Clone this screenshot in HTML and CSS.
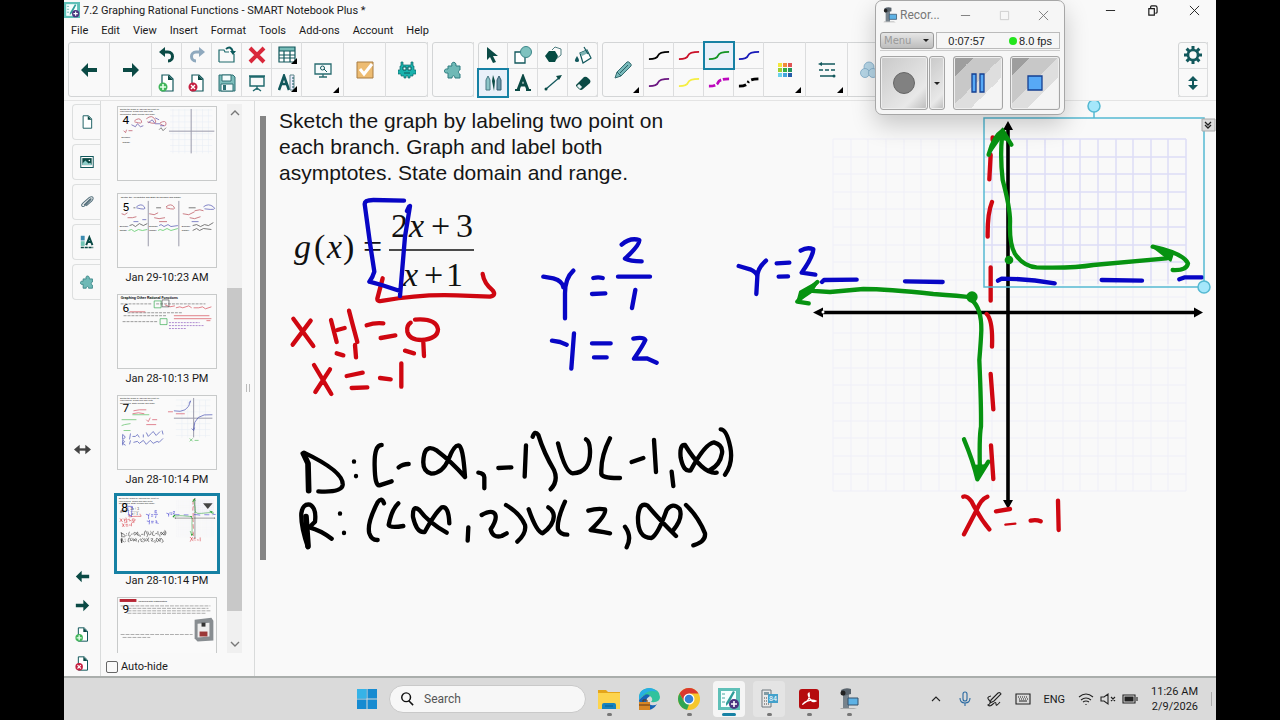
FILE: index.html
```html
<!DOCTYPE html>
<html lang="en">
<head>
<meta charset="utf-8">
<title>7.2 Graphing Rational Functions - SMART Notebook Plus</title>
<link rel="stylesheet" href="styles.css">
</head>
<body>
<svg class="sprite" aria-hidden="true">
  <symbol id="left" viewBox="0 0 18 18"><path d="M1 9 8 2v5h9v4H8v5z" fill="#0b4a45"/></symbol>
  <symbol id="right" viewBox="0 0 18 18"><path d="M17 9 10 2v5H1v4h9v5z" fill="#0b4a45"/></symbol>
  <symbol id="undo" viewBox="0 0 18 18"><path d="M4 6h6c6 0 6 9 0 9" fill="none" stroke="#0b4a45" stroke-width="3"/><path d="M1 6 7 1v10z" fill="#0b4a45"/></symbol>
  <symbol id="redo" viewBox="0 0 18 18"><path d="M14 6H8c-6 0-6 9 0 9" fill="none" stroke="#8fa9be" stroke-width="3"/><path d="M17 6 11 1v10z" fill="#8fa9be"/></symbol>
  <symbol id="open" viewBox="0 0 18 18"><path d="M1 16V4h5l1 2h4M16 8v8H1" fill="none" stroke="#1e6a6c" stroke-width="1.2"/><path d="M8 3q5-4 7 3" fill="none" stroke="#0b5a5c" stroke-width="2"/><path d="M12 5h6l-3 4z" fill="#0b5a5c"/></symbol>
  <symbol id="delete" viewBox="0 0 18 18"><path d="m2 2 14 14M16 2 2 16" stroke="#d9283b" stroke-width="4"/></symbol>
  <symbol id="table" viewBox="0 0 18 18"><path d="M1 1h16v15H1z" fill="#fff"/><path d="M1 1h16v4H1z" fill="#79bcb8"/><path d="M1 1h16v15H1zM1 5h16M1 9h16M1 12h16M6 5v11M12 5v11" fill="none" stroke="#12585c" stroke-width="1.2"/></symbol>
  <symbol id="page" viewBox="0 0 18 18"><path d="M4 1h7l4 4v12H4z" fill="#fff" stroke="#12585c" stroke-width="1.2"/><path d="M10 1v5h5z" fill="#0b4a45"/></symbol>
  <symbol id="pageadd" viewBox="0 0 18 18"><use href="#page"/><circle cx="5" cy="13" r="4.5" fill="#42b55c"/><path d="M5 10v6M2 13h6" stroke="#e6ffe9" stroke-width="1.6"/></symbol>
  <symbol id="pagedel" viewBox="0 0 18 18"><use href="#page"/><circle cx="5" cy="13" r="4.5" fill="#c51f40"/><path d="m3 11 4 4m0-4-4 4" stroke="#fff" stroke-width="1.4"/></symbol>
  <symbol id="save" viewBox="0 0 18 18"><path d="M1 1h14l2 2v14H1z" fill="#7dbdbb" stroke="#2e7074"/><path d="M4 1h9v6H4zM3 10h12v7H3z" fill="#f4fbfb" stroke="#2e7074"/><path d="M5 11h3v5H5z" fill="#2e7074"/></symbol>
  <symbol id="shade" viewBox="0 0 18 18"><path d="M1 2h16M2 3h14v9H2zM9 12v4M5 17l4-3 4 3" fill="none" stroke="#1e686c" stroke-width="1.4"/></symbol>
  <symbol id="measure" viewBox="0 0 18 18"><path d="M1 16 6 2l5 14M3 10h6" fill="none" stroke="#12585c" stroke-width="2.6"/><path d="M12 1h4v15h-4z" fill="#eef" stroke="#5c8588"/><path d="M14 4h2m-2 3h2m-2 3h2m-2 3h2" stroke="#12585c"/></symbol>
  <symbol id="screen" viewBox="0 0 18 18"><path d="M1 3h16v10H1zM5 16h8M9 13v3" fill="#f5fbfc" stroke="#286c70" stroke-width="1.3"/><circle cx="8.500" cy="7" r="2" fill="none" stroke="#12585c"/><path d="m10 8 3 3" stroke="#12585c"/></symbol>
  <symbol id="check" viewBox="0 0 18 18"><path d="M1 1h16v16H1z" fill="#edbc72" stroke="#a87c42"/><path d="m4 8 4 5 8-10" fill="none" stroke="#fff" stroke-width="3"/></symbol>
  <symbol id="monster" viewBox="0 0 18 18"><path d="M3 1h2v3h8V1h2v4h1v4h2v4h-3v2h-3v2h-2v-2H8v2H6v-2H3v-2H0V9h2V5h1z" fill="#19b2ad" stroke="#11696c" stroke-width=".7"/><path d="M5 6h3v3H5zm5 0h3v3h-3zM6 12h6" fill="#dff" stroke="#11585c"/></symbol>
  <symbol id="puzzle" viewBox="0 0 18 18"><path d="M4 5h4c-2-5 5-5 4 0h4v4c-2 0-2 4 0 4v4h-5c0-3-3-3-3 0H4v-5c-5 1-5-5 0-4z" fill="#6fb9b6" stroke="#2f7d80"/></symbol>
  <symbol id="pointer" viewBox="0 0 18 18"><path d="M3 1v13l3-3 3 6 3-1-3-6h5z" fill="#0b4a45"/></symbol>
  <symbol id="shapes" viewBox="0 0 18 18"><path d="M1 6h10v11H1z" fill="#fff" stroke="#12585c" stroke-width="1.3"/><circle cx="12" cy="6" r="5.500" fill="#7fc2bf" stroke="#3b8588"/></symbol>
  <symbol id="poly" viewBox="0 0 18 18"><path d="m8 4 3-3 6 2v6l-5 4" fill="none" stroke="#4f7e80"/><path d="M5 5h6l3 5-3 6H5l-4-6z" fill="#064b43"/></symbol>
  <symbol id="bucket" viewBox="0 0 18 18"><path d="m6 7 7-3 4 8-8 5z" fill="#fff" stroke="#12585c" stroke-width="1.2"/><path d="m6 7 7-3 1 3-6 3z" fill="#7fb4b4"/><path d="m10 1 4 7" stroke="#12585c" stroke-width="1.2"/><path d="M3 10q-4 6 0 6t0-6" fill="#12585c"/></symbol>
  <symbol id="pens" viewBox="0 0 18 18"><path d="m2 6 2-4 2 4v10H2z" fill="#8cc5c8" stroke="#497984"/><path d="m9 1 2 6-1 10-2-10z" fill="#0b4a45"/><path d="m13 6 2-4 2 4v10h-4z" fill="#6b98a8" stroke="#345c70"/></symbol>
  <symbol id="glyphA" viewBox="0 0 18 18"><path d="M4 16 9 3l5 13M5 11h8" fill="none" stroke="#0b4a45" stroke-width="3"/><path d="M1 16h5m6 0h5" stroke="#0b4a45" stroke-width="2"/></symbol>
  <symbol id="line" viewBox="0 0 18 18"><path d="M2 15 16 3" stroke="#12585c" stroke-width="1.3"/><circle cx="2" cy="15" r="1.500" fill="#0b4a45"/><path d="m12 2 6-1-3 5z" fill="#0b4a45"/></symbol>
  <symbol id="eraser" viewBox="0 0 18 18"><path d="m2 11 8-8q2-1 4 1l2 2q1 1 0 3l-7 6q-2 2-4 0l-3-3z" fill="#0b4a45"/><path d="m4 11 3 3" stroke="#e8f4f4" stroke-width="3"/></symbol>
  <symbol id="pencil" viewBox="0 0 18 18"><path d="m1 17 2-6L13 1q1-1 3 1t1 3L7 15z" fill="#78b9ba" stroke="#356d70"/><path d="m3 11 4 4M6 12l8-8" stroke="#2a6267" fill="none"/></symbol>
  <symbol id="wave" viewBox="0 0 24 12"><path d="M1 10c5 0 9-1 10-4s6-4 12-4" fill="none" stroke="currentColor" stroke-width="2"/></symbol>
  <symbol id="dash" viewBox="0 0 24 12"><path d="M1 10c5 0 9-1 10-4s6-4 12-4" fill="none" stroke="currentColor" stroke-width="3" stroke-dasharray="7 2"/></symbol>
  <symbol id="dots" viewBox="0 0 24 12"><path d="M1 10c5 0 9-1 10-4s6-4 12-4" fill="none" stroke="currentColor" stroke-width="3" stroke-dasharray="8 3 2 3"/></symbol>
  <symbol id="palette" viewBox="0 0 18 18"><path fill="#f4e63c" d="M2 2h4v4H2z"/><path fill="#ef8b3c" d="M7 2h4v4H7z"/><path fill="#e05555" d="M12 2h4v4h-4z"/><path fill="#9bd032" d="M2 7h4v4H2z"/><path fill="#35ad45" d="M7 7h4v4H7z"/><path fill="#26935c" d="M12 7h4v4h-4z"/><path fill="#6bd3ea" d="M2 12h4v4H2z"/><path fill="#43a5dd" d="M7 12h4v4H7z"/><path fill="#245ca8" d="M12 12h4v4h-4z"/></symbol>
  <symbol id="styles" viewBox="0 0 18 18"><path d="M2 3h15M2 15h15" stroke="#12585c" stroke-width="1.3"/><path d="M1 9h17" stroke="#12585c" stroke-width="1.3" stroke-dasharray="4 2"/><path d="m4 1-4 2 4 2z" fill="#12585c"/><circle cx="16" cy="15" r="1.500" fill="#12585c"/></symbol>
  <symbol id="bubbles" viewBox="0 0 18 18"><g fill="#b7d7e8" stroke="#7daac6" stroke-width=".8"><circle cx="9" cy="6" r="5"/><circle cx="5" cy="12" r="4.500"/><circle cx="13" cy="12" r="4.500"/></g></symbol>
  <symbol id="gear" viewBox="0 0 18 18"><path d="M9 0v4m0 10v4M0 9h4m10 0h4M2.600 2.600l3 3m6.800 6.800 3 3m0-12.800-3 3m-6.800 6.800-3 3" stroke="#12585c" stroke-width="3"/><circle cx="9" cy="9" r="5" fill="#f9f9f9" stroke="#12585c" stroke-width="2.600"/></symbol>
  <symbol id="vert" viewBox="0 0 18 18"><path d="m9 2 5 5H4zm0 14 5-5H4z" fill="#12585c"/><path d="M9 5v8" stroke="#12585c" stroke-width="2"/></symbol>
  <symbol id="picture" viewBox="0 0 18 18"><path d="M1 2h16v14H1z" fill="#fff" stroke="#12585c" stroke-width="1.300"/><path d="M3 4h12v9H3z" fill="#0b4a45"/><path d="m3 11 4-4 4 4 2-1 2 2v1H3z" fill="#8dccc8"/><circle cx="12" cy="7" r="1" fill="#fff"/></symbol>
  <symbol id="clip" viewBox="0 0 18 18"><path d="m5 13 8-8q2-1 1 1l-8 8q-3 2-4-1 0-1 2-3l8-7q4-2 5 1 0 2-2 4l-7 6" fill="none" stroke="#526e7a" stroke-width="1.300"/></symbol>
  <symbol id="props" viewBox="0 0 18 18"><path d="M1 1h5v6H1z" fill="#3b8bb0"/><path d="M1 8h5v6H1z" fill="#70c4b4"/><path d="m8 13 4-10 4 10m-6-4h4" fill="none" stroke="#0b4a45" stroke-width="2.500"/><path d="M1 16h16" stroke="#0b4a45" stroke-width="2" stroke-dasharray="4 1"/></symbol>
  <symbol id="horiz" viewBox="0 0 18 18"><path d="m0 9 6-5v10zm18 0-6-5v10z" fill="#444"/><path d="M4 9h10" stroke="#444" stroke-width="2.500"/></symbol>
  <symbol id="smart" viewBox="0 0 22 22"><path d="M0 0h22v22H0z" fill="#5fc0b8"/><path d="M3 3h15v16H3z" fill="#f7ffff"/><path d="M4 6h3m-3 4h3m-3 4h3" stroke="#4aa6a0"/><path d="m8 15 7-12 2 1-6 11-3 3z" fill="#2f9d9a"/><circle cx="16" cy="16" r="5" fill="#4b347f"/><path d="M16 13v6m-3-3h6" stroke="#fff" stroke-width="1.600"/></symbol>
  <symbol id="camera" viewBox="0 0 22 22"><path d="M3 20h13l3 1H2z" fill="#aaa"/><path d="M5 6h6v14H5z" fill="#77828b"/><path d="M3 2q5-3 10-1v5l-8 2z" fill="#59636c"/><circle cx="5" cy="5" r="2.500" fill="#222"/><path d="M10 10h10v7H10z" fill="#5eb2e5" stroke="#35516a"/></symbol>
  <symbol id="minimize" viewBox="0 0 12 12"><path d="M1 6h10" stroke="currentColor"/></symbol>
  <symbol id="maximize" viewBox="0 0 12 12"><path d="M1.500 1.500h9v9h-9z" fill="none" stroke="currentColor"/></symbol>
  <symbol id="restore" viewBox="0 0 12 12"><path d="M2 4h6v7H2zM4 4V2q0-1 1-1h4q2 0 2 2v5q0 1-2 1" fill="none" stroke="currentColor" stroke-width="1.300"/></symbol>
  <symbol id="close" viewBox="0 0 12 12"><path d="m1 1 10 10M11 1 1 11" stroke="currentColor"/></symbol>
  <symbol id="up" viewBox="0 0 12 12"><path d="m2 8 4-4 4 4" fill="none" stroke="currentColor" stroke-width="1.400"/></symbol>
  <symbol id="down" viewBox="0 0 12 12"><path d="m2 4 4 4 4-4" fill="none" stroke="currentColor" stroke-width="1.400"/></symbol>

  <g id="prompt" class="prompt"><text x="279" y="128">Sketch the graph by labeling two point on</text><text x="279" y="154">each branch. Graph and label both</text><text x="279" y="180">asymptotes. State domain and range.</text></g>

  <g id="slide">
    <use href="#prompt"/>
    <g class="math"><text x="294" y="258"><tspan class="it">g</tspan><tspan x="314">(</tspan><tspan class="it" x="327">x</tspan><tspan x="343">)</tspan><tspan x="363">=</tspan></text><text x="391" y="237">2<tspan class="it" x="409">x</tspan><tspan x="431">+</tspan><tspan x="456">3</tspan></text><text y="286"><tspan class="it" x="403">x</tspan><tspan x="424">+</tspan><tspan x="446">1</tspan></text></g>
    <path d="M389 250h85" stroke="#111" stroke-width="1.500"/>
    <path class="grid" d="M833 139h353M833 157h353M833 174h353M833 192h353M833 209h353M833 227h353M833 245h353M833 262h353M833 280h353M833 297h353M833 333h353M833 350h353M833 368h353M833 385h353M833 403h353M833 421h353M833 438h353M833 456h353M833 474h353M833 491h353M833 139v352M851 139v352M868 139v352M886 139v352M904 139v352M921 139v352M939 139v352M956 139v352M974 139v352M992 139v352M1027 139v352M1045 139v352M1063 139v352M1080 139v352M1098 139v352M1116 139v352M1133 139v352M1151 139v352M1168 139v352M1186 139v352"/>
    <path class="grid strong" d="M984 139h202M984 157h202M984 174h202M984 192h202M984 209h202M984 227h202M984 245h202M984 262h202M992 139v145M1027 139v145M1045 139v145M1063 139v145M1080 139v145M1098 139v145M1116 139v145M1133 139v145M1151 139v145M1168 139v145M1186 139v145"/>
    <path d="M820 312.500h376M1008 128v375" stroke="#000" stroke-width="3.600"/>
    <path d="m813 312.500 10-5v10zM1203 312.500l-9-5v10zM1008 121l5 9h-10zM1008 509l5-9h-10z"/><circle cx="823" cy="312" r="1.500" fill="#fff"/>
    <g transform="translate(270 100) scale(.33333)" class="ink">
      <path class="r" d="M338 535 322 596Q322 606 340 602 450 582 560 586L660 590Q680 586 668 571 642 550 638 522M70 656 130 738M122 662 68 734M183 660 200 726M202 690 224 684M237 632 248 674 262 726M290 676Q315 667 340 670M332 714 376 706M422 668Q409 676 412 695 418 720 455 720 503 716 504 688 498 654 435 659M200 760 220 766M255 735 258 772M405 752 432 760M460 728 462 768M132 795 184 882M180 808 136 876M230 828 278 818M245 864 292 862M330 834 362 838M394 790V860"/>
      <path class="b" d="M402 302 310 300Q284 300 284 312L300 430 313 515Q309 530 298 545L335 555 390 573M420 318 405 410 390 588M411 333 417 320M820 530 850 535Q878 543 880 562M910 512Q885 535 885 580V655M970 534Q985 530 998 534M966 582 1006 580M1055 434Q1080 412 1108 420 1110 435 1065 476 1080 484 1115 484M1044 530H1140M1096 570 1086 624M846 722 870 726 890 734M912 700 904 806M966 730H1022M972 772H1010M1090 716Q1120 710 1126 720 1120 735 1092 776L1130 775 1160 788"/>
    </g>
    <g transform="translate(280 410) scale(.33333)" class="ink"><path class="k" d="M68 130 72 128Q192 185 188 225 185 248 115 244M222 154v1M228 198v1M305 105Q282 105 284 170 285 228 298 226L335 214M356 172Q368 162 386 162M555 201Q549 105 535 106 521 107 506 147 488 190 454 191 421 183 433 132 441 103 471 122 515 155 555 201M595 188Q612 190 613 202V235M655 174 694 172M738 106 734 200M758 80Q765 60 775 75 792 130 822 180 836 212 812 238M834 100Q856 188 878 190 933 188 930 120 929 94 918 88M990 85Q962 140 964 188 960 205 1020 204M1055 156 1090 144M1122 90 1128 186M1175 185 1180 228M1310 188Q1270 194 1215 105 1198 103 1202 143 1211 188 1232 181 1275 101 1302 97 1330 105 1326 130 1320 165 1290 180M1322 58Q1340 58 1351 112 1360 160 1335 194M84 412Q62 350 64 310 68 280 90 284 110 295 105 335L88 352Q122 361 155 386M180 310v1M192 368v1M312 280Q305 260 293 277 260 340 268 370 275 391 293 390M355 280Q335 298 326 345 329 355 370 348M500 368Q445 337 418 300 397 283 399 321 410 370 434 366 466 308 485 292 506 286 508 340M565 352 563 392M605 315Q635 298 645 312 653 327 632 358 638 385 665 378L680 370M678 285Q720 310 735 345 740 370 712 395M746 298Q770 367 788 370 828 340 820 310 815 297 805 292M855 275Q830 330 834 358 841 374 862 374M925 302Q951 294 975 298 980 315 932 360 950 362 990 370M1035 350Q1057 380 1040 412M1188 378Q1139 330 1103 287 1078 274 1074 320 1072 384 1114 384 1133 376 1160 300 1178 275 1199 297 1210 325 1178 363M1218 285Q1255 320 1275 370 1278 395 1240 406"/><path class="k bold" d="M71 132 84 160 86 242M78 320 84 408"/></g>
    <g transform="translate(720 90) scale(.33333)" class="ink">
      <path class="b" d="M56 528 90 538Q112 548 112 560M138 512Q112 535 112 560L109 612M170 520 208 518M176 560 204 559M242 482Q262 470 280 478 278 502 245 548L260 550 286 554M306 576 312 570 410 569M555 574 668 576M834 572 845 566Q920 566 1004 580M1145 570 1266 572M1378 568 1395 562H1446"/>
      <path class="r" d="M818 142V150M812 195 808 268M816 336Q802 370 803 440M812 532V632M800 672Q819 690 816 770"/>
      <path class="g" d="M846 140Q840 200 848 270 872 360 870 400 868 460 884 490 910 530 950 532 1060 535 1120 525L1340 505M806 194Q820 140 848 122L874 164M292 576Q255 610 232 635L266 640M756 622Q720 618 640 612 500 597 430 597L330 606 266 602M1298 470Q1390 490 1404 520 1400 542 1358 540"/>
      <path d="M806 194 848 116 860 150 840 145zM292 576 240 605 232 635 275 606zM1298 470 1360 487 1352 512z" fill="#079311" stroke="#079311" stroke-width="6"/><circle cx="867" cy="510" r="13" fill="#079311"/><circle cx="756" cy="621" r="17" fill="#079311"/>
    </g>
    <g transform="translate(780 280) scale(.33333)" class="ink"><path class="g" d="M575 60Q605 85 604 150 603 180 598 240 604 380 603 440 597 470 600 585M552 478Q580 545 592 598L625 545"/><path d="m582 554 10 44 28-45z" fill="#079311"/><path class="r" d="M632 282 640 388M633 496 640 597M550 650Q560 645 575 665 600 715 628 748M622 650Q602 658 590 690L552 763M648 694 690 687M752 722Q768 718 782 724M834 662 836 750"/><path class="r thin" d="M676 734 706 731"/></g>
  </g>
</svg>

<div class="app">
  <header class="title"><svg class="i16"><use href="#smart"/></svg><span>7.2 Graphing Rational Functions - SMART Notebook Plus *</span>
    <div class="wincontrols"><button aria-label="Minimize"><svg><use href="#minimize"/></svg></button><button aria-label="Restore"><svg><use href="#restore"/></svg></button><button aria-label="Close"><svg><use href="#close"/></svg></button></div>
  </header>
  <nav class="menu"><button>File</button><button>Edit</button><button>View</button><button>Insert</button><button>Format</button><button>Tools</button><button>Add-ons</button><button>Account</button><button>Help</button></nav>

  <div class="toolbar">
    <div class="group">
      <button class="big" aria-label="Previous page"><svg><use href="#left"/></svg></button><button class="big" aria-label="Next page"><svg><use href="#right"/></svg></button>
      <button aria-label="Undo"><svg><use href="#undo"/></svg></button><button aria-label="Add page"><svg><use href="#pageadd"/></svg></button>
      <button aria-label="Redo"><svg><use href="#redo"/></svg></button><button aria-label="Delete page"><svg><use href="#pagedel"/></svg></button>
      <button aria-label="Open"><svg><use href="#open"/></svg></button><button aria-label="Save"><svg><use href="#save"/></svg></button>
      <button aria-label="Delete"><svg><use href="#delete"/></svg></button><button aria-label="Screen shade"><svg><use href="#shade"/></svg></button>
      <button class="more" aria-label="Table"><svg><use href="#table"/></svg></button><button class="more" aria-label="Measurement tools"><svg><use href="#measure"/></svg></button>
      <button class="big more" aria-label="View screens"><svg><use href="#screen"/></svg></button><button class="big" aria-label="Response"><svg><use href="#check"/></svg></button><button class="big" aria-label="Activities"><svg><use href="#monster"/></svg></button>
    </div>
    <div class="group"><button class="big" aria-label="Add-ons"><svg><use href="#puzzle"/></svg></button></div>
    <div class="group">
      <button aria-label="Select"><svg><use href="#pointer"/></svg></button><button class="on" aria-label="Pens"><svg><use href="#pens"/></svg></button>
      <button aria-label="Shapes"><svg><use href="#shapes"/></svg></button><button aria-label="Text"><svg><use href="#glyphA"/></svg></button>
      <button aria-label="Polygons"><svg><use href="#poly"/></svg></button><button aria-label="Lines"><svg><use href="#line"/></svg></button>
      <button aria-label="Fill"><svg><use href="#bucket"/></svg></button><button aria-label="Eraser"><svg><use href="#eraser"/></svg></button>
    </div>
    <div class="group pens">
      <button class="big more" aria-label="Pen types"><svg><use href="#pencil"/></svg></button>
      <button class="black" aria-label="Black pen"><svg><use href="#wave"/></svg></button><button class="purple" aria-label="Purple pen"><svg><use href="#wave"/></svg></button>
      <button class="red" aria-label="Red pen"><svg><use href="#wave"/></svg></button><button class="yellow" aria-label="Yellow pen"><svg><use href="#wave"/></svg></button>
      <button class="green on" aria-label="Green pen"><svg><use href="#wave"/></svg></button><button class="magenta" aria-label="Magenta dashed pen"><svg><use href="#dash"/></svg></button>
      <button class="blue" aria-label="Blue pen"><svg><use href="#wave"/></svg></button><button class="black" aria-label="Black dotted pen"><svg><use href="#dots"/></svg></button>
      <button class="big more" aria-label="Color"><svg><use href="#palette"/></svg></button><button class="big more" aria-label="Line style"><svg><use href="#styles"/></svg></button><button class="big" aria-label="Transparency"><svg><use href="#bubbles"/></svg></button>
    </div>
    <div class="group last"><button aria-label="Settings"><svg><use href="#gear"/></svg></button><button aria-label="Move toolbar"><svg><use href="#vert"/></svg></button></div>
  </div>

  <main>
    <aside class="rail">
      <div class="tabs"><button aria-label="Pages"><svg><use href="#page"/></svg></button><button aria-label="Gallery"><svg><use href="#picture"/></svg></button><button aria-label="Attachments"><svg><use href="#clip"/></svg></button><button aria-label="Properties"><svg><use href="#props"/></svg></button><button aria-label="Add-ons"><svg><use href="#puzzle"/></svg></button></div>
      <button class="swap" aria-label="Move panel"><svg><use href="#horiz"/></svg></button>
      <div class="pager"><button aria-label="Previous"><svg><use href="#left"/></svg></button><button aria-label="Next"><svg><use href="#right"/></svg></button><button aria-label="Add"><svg><use href="#pageadd"/></svg></button><button aria-label="Remove"><svg><use href="#pagedel"/></svg></button></div>
    </aside>
    <section class="sorter">
      <div class="scroller">
        <div class="thumbs">
          <figure class="plain"><svg viewBox="0 0 98 74"><use href="#prompt" transform="scale(.103) translate(-266 -101)"/><path class="tg" d="M52 3h43M52 9h43M52 15h43M52 21h43M52 27h43M52 33h43M52 39h43M52 45h43M55 2v45M61 2v45M67 2v45M79 2v45M85 2v45M91 2v45"/><path class="ta" d="M51 24.500h46M73.500 2v45"/><g class="s"><path stroke="#b43a50" d="M16 14q5-4 7 0t-7 1M28 12q6-5 9 1t-8 2M42 16q6-3 6 1t-6 0M5 24l2 2 1-3m2 1h4"/><path stroke="#483b9e" d="M13 18l4 2 2-3 3 3 3-1M30 16l4-3 3 4 5 0M37 11l4 2M42 19h4"/><path stroke="#444" d="M41 23l2-2 2 3 3-3"/></g><text class="tiny" x="3" y="31">Domain:</text><text class="tiny" x="4" y="36">Range:</text><text class="num" x="4" y="17">4</text></svg></figure>
          <figure><svg viewBox="0 0 98 74"><text class="tiny" x="2" y="4">Identify the Asymptotes and State the Domain and Range</text><path class="ta" d="M30 7v46M61 7v46"/><g class="s"><path stroke="#4043aa" d="M18 13q5-4 8 0t-8 1M86 13q5-4 10 0t-9 2M24 26h4M41 32l2-1 3 2 4-2 3 2 7-1M15 28h5M74 28h7"/><path stroke="#b33a46" d="M3 20l3 1 3-2m0 5 5 0 4-1M48 13q5-4 8 0t-8 1M31 20l5 1 4-2M36 24l5 1 6-1M41 28h8M65 20l6 1 6-3M72 24l5 1 6-2M77 17q6-2 9 0"/><path stroke="#37c146" d="M10 37l3-1 3 2 4-2 4 1 5-1M40 37l2-1 3 1 4-2 4 2 7-2"/><path stroke="#333" d="M11 32l3-1 3 2 4-3 4 2 4-2M75 32l4-1 4 2 4-2 4 1 5-3M75 37l4-2 3 2 4-2 8 1M15 14h2M38 14h5M71 14h7"/></g><text class="tiny" x="1" y="33">Domain:</text><text class="tiny" x="1" y="38">Range:</text><text class="tiny" x="31" y="33">Domain:</text><text class="tiny" x="31" y="38">Range:</text><text class="tiny" x="64" y="33">Domain:</text><text class="tiny" x="64" y="38">Range:</text><text class="num" x="4" y="17">5</text></svg><figcaption>Jan 29-10:23 AM</figcaption></figure>
          <figure><svg viewBox="0 0 98 74"><text class="small" x="2" y="4">Graphing Other Rational Functions</text><path d="M2 9h32m4 0h50M9 18h56M5 21h44M4 27h35" stroke="#999" stroke-width="1" stroke-dasharray="3 1"/><path class="s" stroke="#d23d49" d="M47 10l5 2 5-1M58 13l4-1 3 1 6-2 3 2M76 13h5l4-1 3 2 6-2M11 17h16M56 21h36M56 24h38M89 26h4"/><path class="s" stroke="#28a445" d="M36 6h7v7h-7zM42 24h7v6h-7z"/><path class="s" stroke="#454747" d="M44 5h7v7h-7z"/><path class="s" stroke="#8149b8" stroke-dasharray="2 1" d="M51 28h31M51 31h36M51 34h18"/><text class="num" x="4" y="17">6</text></svg><figcaption>Jan 28-10:13 PM</figcaption></figure>
          <figure><svg viewBox="0 0 98 74"><use href="#prompt" transform="scale(.103) translate(-266 -101)"/><path class="tg" d="M58 4h35M58 10h35M58 16h35M58 28h35M58 34h35M58 40h35M64 4v38M70 4v38M82 4v38M88 4v38"/><path class="ta" d="M56 22.500h39M76 2v40"/><g class="s"><path stroke="#3943ae" d="M56 15q14 3 17-10l-2 2M76 34q0-17 19-15M74 33l2 2 1-3M4 39v5q5-2 0-5m8-1-1 6m3-3h3l2-2 2 3m4-3v3m3-5 2 4 3-3 2-2 3 4 4-4m2-1 1 4M4 45v5m0-5q4 1 0 3l3 2m5-5-1 4m4-2 4-1 2 2 4-3 3 4 4-4 3 3 4-2 2 1 4-4"/><path stroke="#d34357" d="M15 15l6-1 7 0M14 18l6-1 6 1M28 24l2 2 2-4m2 2h5M28 29h10M50 16h5m3 2h9"/><path stroke="#48b852" d="M14 19h17M3 24h15M3 30l3-1 6-1M5 35h7M72 43l3 3m0-3-3 3m5-1h4"/></g><text class="num" x="4" y="16">7</text></svg><figcaption>Jan 28-10:14 PM</figcaption></figure>
          <figure class="selected"><svg viewBox="266 101 950 717"><use href="#slide"/><path d="M1085 170h92l-46 55z" fill="#444"/><text x="304" y="256" class="bignum">8</text></svg><figcaption>Jan 28-10:14 PM</figcaption></figure>
          <figure class="plain"><svg viewBox="0 0 98 74"><path d="M1 1h17v3H1z" fill="#b72735"/><text class="tiny" x="20" y="4">Modeling with Mathematics</text><path d="M2 8h91M9 10.500h82M9 13h85M9 15.500h80M2 37h73M4 40h28" stroke="#999" stroke-width=".8" stroke-dasharray="4 1"/><path d="m77 22 17-2 2 3v20l-16 1-3-3z" fill="#888d91"/><path d="m80 26 12-1v14l-12 1z" fill="#eee"/><path d="M82 34h8v5h-8z" fill="#9b3838"/><path d="M84 25h4v4h-4z" fill="#333"/><text class="num" x="4" y="15">9</text></svg></figure>
        </div>
        <div class="scrollbar"><button aria-label="Scroll up"><svg><use href="#up"/></svg></button><div class="track"><div class="thumb"></div></div><button aria-label="Scroll down"><svg><use href="#down"/></svg></button></div>
        <div class="grip"></div>
      </div>
      <label class="autohide"><input type="checkbox">Auto-hide</label>
    </section>
    <div class="edge"><div></div></div>
    <section class="canvas">
      <svg class="board" viewBox="266 101 950 575"><use href="#slide"/><g fill="#a5e7fb" stroke="#55b9d2" stroke-width="1.500"><path d="M984 118h220v169H984zM1094 112v6" fill="none"/><circle cx="1094" cy="106" r="6"/><circle cx="1204" cy="287" r="6"/></g><path d="M1202 119h13v12h-13z" fill="#ddd" stroke="#aaa"/><path d="m1205 122 3 3 3-3m-6 3 3 3 3-3" fill="none" stroke="#222" stroke-width="1.300"/></svg>
    </section>
  </main>

  <footer>
    <div class="apps">
      <button aria-label="Start"><svg viewBox="0 0 22 22"><path d="M1 1h9.500v9.500H1zm10.500 0H21v9.500h-9.500zM1 11.500h9.500V21H1zm10.500 0H21V21h-9.500z" fill="#168bd1"/><path d="M1 1h9.500v9.500H1z" fill="#36b3e7"/></svg></button>
      <label class="search"><svg viewBox="0 0 16 16"><circle cx="7" cy="6" r="5"/><path d="m10 10 5 5"/></svg><input type="text" placeholder="Search" aria-label="Search"></label>
      <div class="pins">
      <button class="run" aria-label="Files"><svg viewBox="0 0 22 22"><path d="M0 2h8l2 2h12v17H0z" fill="#e4a51a"/><path d="M0 5h22v16H0z" fill="#fdd44d"/><path d="M4 21v-4q0-2 2-2h10q2 0 2 2v4z" fill="#1683bf"/><path d="M7 18h8" stroke="#075c91"/></svg></button>
      <button aria-label="Edge"><svg viewBox="0 0 22 22"><path d="M1 12Q0 1 11 0q11 1 11 9 0 6-9 5 3-3-1-6-5-3-11 4z" fill="#31c29d"/><path d="M1 12Q0 1 11 0q5 0 8 4-10-4-18 8z" fill="#28aee4"/><path d="M1 12q8-9 11-4-8 5 1 9 4 1 6-1-5 8-12 5-6-2-6-9z" fill="#1764b5"/><path d="M1 14h11v8H1z" fill="#d78624"/><path d="M1 17h11M5 14v-2h4v2" fill="none" stroke="#5d361a"/></svg></button>
      <button class="run" aria-label="Chrome"><svg viewBox="0 0 22 22"><circle cx="11" cy="11" r="11" fill="#f5c72d"/><path d="M1.500 5.500A11 11 0 0 1 20.500 5.500H11l-5 8z" fill="#da382f"/><path d="M1.500 5.500 6 13.500l5 3-2 5.300A11 11 0 0 1 1.500 5.500z" fill="#2fa553"/><circle cx="11" cy="11" r="5.500" fill="#fff"/><circle cx="11" cy="11" r="4.300" fill="#347fd6"/></svg></button>
      <button class="run active" aria-label="SMART Notebook"><svg><use href="#smart"/></svg></button>
      <button class="run hot" aria-label="Calculator"><svg viewBox="0 0 22 22"><path d="M4 2h9v17H4z" fill="#e8e8e8" stroke="#6d777d"/><path d="M6 4h5v3H6z" fill="#829ba4"/><path d="M6 10h5m-5 3h5m-5 3h5" stroke="#444" stroke-dasharray="1 1"/><path d="M10 6h10v9H10z" fill="#43a1cb"/><text x="11" y="13" class="calc">84</text></svg></button>
      <button class="run" aria-label="Acrobat"><svg viewBox="0 0 22 22"><rect x="1" y="1" width="20" height="20" rx="3" fill="#b50b0e"/><path d="M5 16q8-4 6-11-2 1 1 6 3 4 6 2-4-2-11 1-3 3-2 2z" fill="none" stroke="#fff" stroke-width="1.300"/></svg></button>
      <button class="run" aria-label="Recorder"><svg><use href="#camera"/></svg></button>
      </div>
    </div>
    <div class="tray">
      <button aria-label="Show hidden icons"><svg viewBox="0 0 16 16"><path d="m4 10 4-4 4 4"/></svg></button>
      <button class="mic" aria-label="Microphone"><svg viewBox="0 0 16 16"><rect x="6" y="1" width="4" height="9" rx="2"/><path d="M3 7q0 5 5 5t5-5M8 12v3"/></svg></button>
      <button aria-label="Pen"><svg viewBox="0 0 16 16"><path d="m5 9 7-7q2-1 3 1l-7 7-4 2zM5 5Q0 6 3 9t-1 5q2 2 5-1t3 0 4-2"/></svg></button>
      <button aria-label="Keyboard"><svg viewBox="0 0 16 16"><path d="M1 3h14v10H1zM4 10h8"/><path d="M3 6h10M4 8h9" stroke-dasharray="1 1"/></svg></button>
      <button class="lang">ENG</button>
      <div class="status"><svg viewBox="0 0 16 16"><path d="M1 6q7-6 14 0M3 9q5-4 10 0M5 11q3-2 6 0M8 13v1"/></svg><svg viewBox="0 0 16 16"><path d="M1 6h3l4-3v10l-4-3H1zM11 6l4 4m0-4-4 4"/></svg><svg viewBox="0 0 16 16"><path d="M1 4h12v8H1zM15 6v4"/><path d="M3 6h8v4H3z" fill="#222"/></svg></div>
      <time><span>11:26 AM</span><span>2/9/2026</span></time><i></i>
    </div>
  </footer>

  <section class="recorder">
    <header><svg class="i16"><use href="#camera"/></svg><span>Recor...</span><div><button aria-label="Minimize recorder"><svg><use href="#minimize"/></svg></button><button class="dim" aria-label="Maximize recorder"><svg><use href="#maximize"/></svg></button><button aria-label="Close recorder"><svg><use href="#close"/></svg></button></div></header>
    <div class="info"><button>Menu<b></b></button><p><span>0:07:57</span><span class="fps"><i></i>8.0 fps</span></p></div>
    <div class="controls"><div class="split"><button aria-label="Record"><i></i></button><button class="arrow" aria-label="Record options"><b></b></button></div><button class="sq" aria-label="Pause"><svg viewBox="0 0 20 20"><path d="M4 1h4v18H4zM12 1h4v18h-4z"/></svg></button><button class="sq" aria-label="Stop"><svg viewBox="0 0 20 20"><path d="M3 3h14v14H3z"/></svg></button></div>
  </section>
</div>
</body>
</html>
```
FILE: styles.css
```css
* { box-sizing: border-box; }
body { margin: 0; padding: 0 64px; background: #000; color: #1a1a1a; font-family: Roboto, "Noto Sans", sans-serif; font-size: 11px; }
button { display: flex; align-items: center; justify-content: center; margin: 0; padding: 0; border: 0; background: none; color: inherit; font: inherit; }
p, figure { margin: 0; }
svg { display: block; flex: none; }
.sprite { position: absolute; width: 0; height: 0; }
.app { position: relative; display: flex; flex-direction: column; height: 100vh; background: #f9f9f9; overflow: hidden; }
.i16 { width: 16px; height: 16px; }

.title { display: flex; align-items: center; gap: 3px; height: 20px; flex: none; }
.wincontrols { display: flex; margin-left: auto; padding-right: 1px; }
.wincontrols button { width: 42px; height: 20px; }
.wincontrols svg { width: 11px; height: 11px; }
.menu { display: flex; gap: 13px; height: 20px; flex: none; padding: 0 7px; align-items: center; }

.toolbar { display: flex; gap: 4px; height: 61px; flex: none; padding: 2px 8px 0 4px; border-bottom: 1px solid #e4e4e4; align-items: flex-start; }
.group { display: grid; grid-auto-flow: column; grid-template-rows: 27px 28px; outline: 1px solid #d3d5d6; outline-offset: -1px; border-radius: 3px; }
.group button { position: relative; width: 30px; border-right: 1px solid #dcddde; border-bottom: 1px solid #dcddde; }
.group .big { grid-row: span 2; width: 42px; border-bottom: 0; }
.group svg { width: 18px; height: 18px; }
.group .on { background: #e9f0f9; outline: 2px solid #1681a4; outline-offset: -1px; z-index: 1; }
.more::after { content: ""; position: absolute; right: 4px; bottom: 4px; border-left: 6px solid transparent; border-bottom: 6px solid #000; }
.last { margin-left: auto; }
.pens .black svg, .pens .purple svg, .pens .red svg, .pens .yellow svg, .pens .green svg, .pens .magenta svg, .pens .blue svg { width: 22px; height: 11px; }
.black { color: #000; }
.purple { color: #6b1680; }
.red { color: #ca1028; }
.yellow { color: #f5ee41; }
.green { color: #129323; }
.magenta { color: #bd08bd; }
.blue { color: #1719b8; }

main { display: flex; flex: 1; min-height: 0; border-bottom: 2px solid #aaaeac; }
.rail { display: flex; flex-direction: column; width: 36px; flex: none; padding-top: 3px; }
.tabs { display: flex; flex-direction: column; gap: 4px; padding-left: 8px; }
.tabs button { height: 36px; border: 1px solid #dddfdf; border-right: 0; border-radius: 4px 0 0 4px; }
.tabs svg { width: 14px; height: 14px; }
.swap { margin: auto 0; padding-top: 30px; }
.swap svg { width: 17px; height: 17px; }
.pager { display: flex; flex-direction: column; gap: 14px; padding-bottom: 5px; }
.pager svg { width: 15px; height: 15px; }
.sorter { display: flex; flex-direction: column; width: 155px; flex: none; border-left: 1px solid #d9dbdb; border-right: 1px solid #d9dbdb; }
.scroller { display: flex; flex: 1; min-height: 0; }
.thumbs { display: flex; flex-direction: column; flex: none; width: 126px; padding: 5px 0 0 16px; margin-bottom: 4px; overflow: hidden; }
.thumbs figure { width: 100px; height: 101px; flex: none; }
.thumbs figure.plain { height: 87px; }
.thumbs svg { width: 100px; height: 75px; background: #fafafa; border: 1px solid #c8caca; }
.thumbs .selected svg { border: 0; outline: 3px solid #1681a4; }
.thumbs figcaption { padding-top: 2px; line-height: 16px; text-align: center; white-space: nowrap; }
.scrollbar { display: flex; flex-direction: column; width: 15px; margin: 3px 0 4px; background: #f0f0f0; }
.scrollbar button { height: 18px; color: #777; }
.scrollbar svg { width: 12px; height: 12px; }
.track { display: flex; flex-direction: column; flex: 1; padding-bottom: 24px; }
.track::before { content: ""; flex: 34; }
.thumb { flex: 66; background: #c8c8c8; }
.grip { align-self: center; width: 4px; height: 8px; margin: 18px 0 0 4px; border: solid #bbb; border-width: 0 1px; }
.autohide { display: flex; align-items: center; gap: 3px; height: 19px; flex: none; padding-left: 5px; }
.autohide input { appearance: none; width: 12px; height: 12px; margin: 0; border: 1px solid #666; border-radius: 2px; }
.edge { display: flex; width: 11px; flex: none; padding: 15px 0 116px 5px; }
.edge div { flex: 1; background: #858585; }
.canvas { flex: 1; min-width: 0; overflow: hidden; }
.board { width: 100%; aspect-ratio: 950 / 575; }

.prompt { font-family: "Liberation Sans", Arial, sans-serif; font-size: 21px; fill: #151515; }
.math { font-family: "Liberation Serif", serif; font-size: 34px; fill: #111; }
.it { font-style: italic; }
.grid { fill: none; stroke: #efeff8; stroke-width: 1; }
.strong { stroke: #dedef6; stroke-width: 1.5; }
.ink path { stroke-linecap: round; stroke-linejoin: round; }
.ink .r, .ink .b, .ink .g, .ink .k { fill: none; stroke-width: 13; }
.ink .r { stroke: #cf0711; }
.ink .b { stroke: #0806c5; }
.ink .g { stroke: #079311; }
.ink .k { stroke: #000; }
.ink .bold { stroke-width: 17; }
.ink .thin { stroke-width: 7; }
.tg { stroke: #e6edf4; stroke-width: .5; }
.ta { stroke: #99a; stroke-width: 1; }
.s { fill: none; stroke-width: .8; stroke-linejoin: round; opacity: .8; }
.tiny { font-family: "Liberation Sans", sans-serif; font-size: 2.4px; }
.small { font-family: "Liberation Sans", sans-serif; font-size: 3.5px; font-weight: bold; }
.num { font-size: 12px; }
.bignum { font-size: 116px; }

footer { display: flex; align-items: center; height: 42px; flex: none; background: #dadada; }
.apps { display: flex; align-items: center; padding-left: 292px; gap: 11px; }
.apps button > svg { width: 22px; height: 22px; }
.search { display: flex; align-items: center; gap: 10px; width: 197px; height: 28px; padding: 0 10px; background: #f7f7f7; border: 1px solid #c9c9c9; border-radius: 14px; }
.search svg { width: 14px; height: 14px; fill: none; stroke: #111; stroke-width: 1.7; }
.search input { width: 100%; min-width: 0; padding: 0; border: 0; outline: 0; background: none; font: 12px Roboto, sans-serif; }
.search input::placeholder { color: #555; opacity: 1; }
.pins { display: flex; gap: 8px; margin-left: -4px; }
.pins button { position: relative; width: 32px; height: 36px; border-radius: 4px; }
.run::after { content: ""; position: absolute; bottom: 1px; width: 5px; height: 3px; border-radius: 2px; background: #777; }
.active { background: #f5f5f5; }
.active::after { width: 14px; background: #1681a4; }
.hot { background: #e4e4e4; }
.calc { font-size: 7px; fill: #fff; }
.tray { display: flex; align-items: center; gap: 13px; margin-left: auto; padding-right: 4px; }
.tray svg { width: 16px; height: 16px; fill: none; stroke: #222; stroke-width: 1.1; }
.tray .mic svg { stroke: #2868a0; }
.status { display: flex; gap: 6px; }
.tray time { display: flex; flex-direction: column; align-items: flex-end; line-height: 15px; }
.tray i { width: 1px; height: 14px; background: #aaa; }

.recorder { position: absolute; top: 0; left: 811px; width: 190px; height: 115px; padding: 0 4px; background: #f6f6f6; border: 1px solid #a7a7a7; border-radius: 7px; box-shadow: 0 10px 24px rgba(0, 0, 0, .2); }
.recorder header { display: flex; align-items: center; gap: 2px; height: 28px; color: #777; padding-left: 2px; font-size: 12px; }
.recorder header div { display: flex; flex: 1; justify-content: space-between; padding: 0 11px 0 18px; }
.recorder header div svg { width: 11px; height: 11px; }
.recorder .dim { color: #ccc; }
.recorder b { border: 3px solid transparent; border-top-color: #222; border-bottom: 0; }
.info { display: flex; gap: 2px; height: 22px; padding: 3px 0 1px; border-bottom: 1px solid #ccc; font-family: "DejaVu Sans", sans-serif; font-size: 10px; }
.info button { justify-content: space-between; width: 54px; padding: 0 4px 0 3px; background: linear-gradient(#e6e6e6, #bdbdbd); border: 1px solid #999; border-radius: 3px; color: #999; }
.info p { display: flex; align-items: center; justify-content: flex-end; gap: 24px; flex: 1; padding-right: 7px; border: 1px solid #bbb; font-family: "Liberation Sans", sans-serif; font-size: 11px; }
.fps { display: flex; align-items: center; gap: 2px; }
.fps i { width: 8px; height: 8px; border-radius: 50%; background: #23e51d; }
.controls { display: flex; justify-content: space-between; height: 60px; padding-top: 5px; }
.controls button { height: 54px; border: 1px solid #a5a5a5; border-radius: 3px; background: linear-gradient(135deg, #c9c9c9, #e8e8e8 75%, #bbb); box-shadow: inset 0 0 0 1px #eee; }
.split { display: flex; gap: 1px; }
.split button { width: 48px; }
.split .arrow { width: 16px; }
.split i { width: 22px; height: 22px; border: 1px solid #666; border-radius: 50%; background: #818181; }
.controls .sq { width: 50px; background: linear-gradient(135deg, #9e9e9e 20%, #c8c8c8 20%, #c8c8c8 48%, #dedede 48%, #dedede 68%, #f4f4f4 68%); }
.sq svg { width: 20px; height: 20px; fill: #57a9f6; stroke: #153f91; stroke-width: 1.3; }
```
